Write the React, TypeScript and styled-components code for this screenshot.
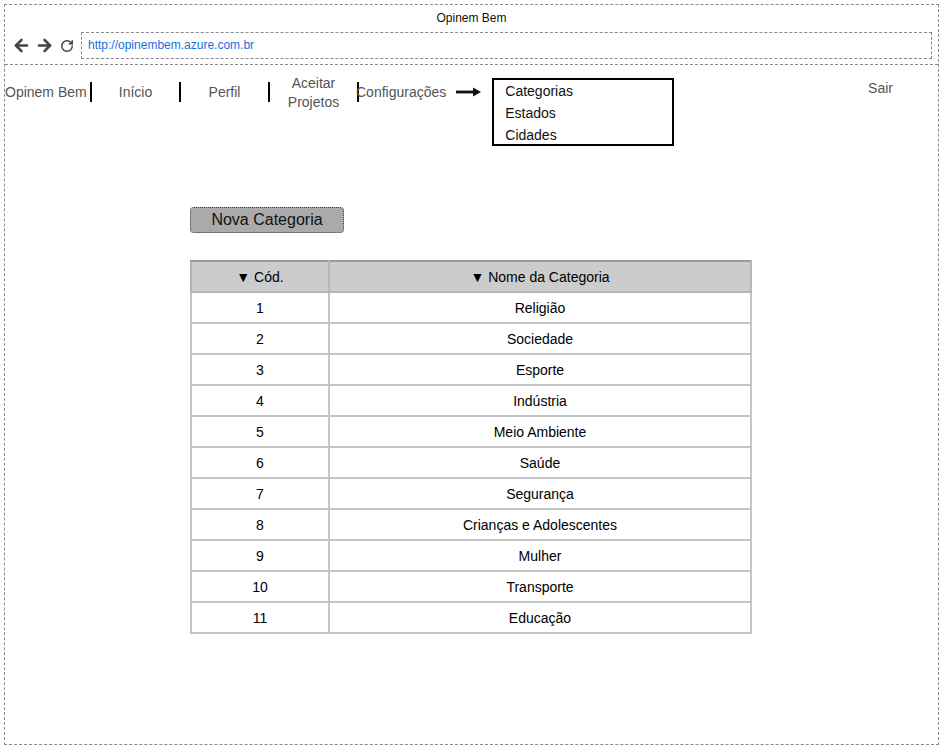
import styled, { createGlobalStyle } from "styled-components";
import { ArrowLeft, ArrowRight, RotateCw } from "lucide-react";

const categorias = [
    "Religião",
    "Sociedade",
    "Esporte",
    "Indústria",
    "Meio Ambiente",
    "Saúde",
    "Segurança",
    "Crianças e Adolescentes",
    "Mulher",
    "Transporte",
    "Educação",
];

export default function App() {
    return (
        <>
            <GlobalStyle />
            <Frame>
                <TopBar>
                    <Title>Opinem Bem</Title>
                    <UrlRow>
                        <NavIcons>
                            <ArrowLeft size={19} strokeWidth={3.2} />
                            <ArrowRight size={19} strokeWidth={3.2} />
                            <RotateCw size={14} strokeWidth={2.6} />
                        </NavIcons>
                        <UrlBox>http://opinembem.azure.com.br</UrlBox>
                    </UrlRow>
                </TopBar>

                <Nav>
                    <Brand>Opinem Bem</Brand>
                    <Separator />
                    <NavLink>Início</NavLink>
                    <Separator />
                    <NavLink>Perfil</NavLink>
                    <Separator />
                    <TwoLineLink>
                        Aceitar
                        <br />
                        Projetos
                    </TwoLineLink>
                    <Separator $overlap />
                    <ConfigLink>Configurações</ConfigLink>
                    <Arrow width="25" height="10" viewBox="0 0 25 10">
                        <rect x="0" y="3.6" width="19" height="2.8" fill="#111" />
                        <polygon points="17,0.5 25,5 17,9.5" fill="#111" />
                    </Arrow>
                    <Dropdown>
                        <DropItem>Categorias</DropItem>
                        <DropItem>Estados</DropItem>
                        <DropItem>Cidades</DropItem>
                    </Dropdown>
                    <Logout>Sair</Logout>
                </Nav>

                <Content>
                    <NewButton>Nova Categoria</NewButton>
                    <Table>
                        <thead>
                            <tr>
                                <HeadCell $width={138}>▼ Cód.</HeadCell>
                                <HeadCell>▼ Nome da Categoria</HeadCell>
                            </tr>
                        </thead>
                        <tbody>
                            {categorias.map((nome, idx) => (
                                <tr key={nome}>
                                    <Cell>{idx + 1}</Cell>
                                    <Cell>{nome}</Cell>
                                </tr>
                            ))}
                        </tbody>
                    </Table>
                </Content>
            </Frame>
        </>
    );
}

const GlobalStyle = createGlobalStyle`
    body {
        margin: 0;
        background: #fff;
        font-family: "Liberation Sans", Arial, sans-serif;
    }
`;

const Frame = styled.div`
    margin: 4px;
    width: 935px;
    height: 741px;
    box-sizing: border-box;
    border: 1px dashed #8a8a8a;
`;

const TopBar = styled.div`
    height: 60px;
    border-bottom: 1px dashed #8a8a8a;
    box-sizing: border-box;
    display: flex;
    flex-direction: column;
`;

const Title = styled.div`
    height: 27px;
    line-height: 26px;
    text-align: center;
    font-size: 12px;
    color: #111;
`;

const UrlRow = styled.div`
    display: flex;
    align-items: center;
    gap: 7px;
    padding: 0 6px 0 7px;
`;

const NavIcons = styled.div`
    display: flex;
    align-items: center;
    gap: 4px;
    color: #444;

    svg:last-child {
        margin-left: 2px;
    }
`;

const UrlBox = styled.div`
    flex: 1;
    height: 27px;
    box-sizing: border-box;
    border: 1px dashed #8a8a8a;
    padding-left: 6px;
    line-height: 25px;
    font-size: 12px;
    color: #1a6fe0;
`;

const Nav = styled.div`
    display: flex;
    align-items: flex-start;
    padding: 13px 45px 0 0;
    color: #555;
    font-size: 14px;
`;

const Brand = styled.div`
    width: 85px;
    height: 28px;
    line-height: 28px;
    white-space: nowrap;
`;

const Separator = styled.div<{ $overlap?: boolean }>`
    width: 2px;
    height: 20px;
    margin-top: 4px;
    background: #000;
    flex-shrink: 0;
    margin-right: ${({ $overlap }) => ($overlap ? "-3px" : "0")};
`;

const NavLink = styled.div`
    width: 87px;
    height: 28px;
    line-height: 28px;
    text-align: center;
`;

const TwoLineLink = styled.div`
    width: 87px;
    margin-top: -4px;
    line-height: 19px;
    text-align: center;
`;

const ConfigLink = styled.div`
    height: 28px;
    line-height: 28px;
    white-space: nowrap;
`;

const Arrow = styled.svg`
    flex-shrink: 0;
    margin: 9px 0 0 10px;
`;

const Dropdown = styled.div`
    width: 182px;
    height: 68px;
    margin: 0 0 0 11px;
    box-sizing: border-box;
    border: 2px solid #000;
    padding: 0 11px;
    color: #111;
`;

const DropItem = styled.div`
    line-height: 22px;
`;

const Logout = styled.div`
    margin-left: auto;
    line-height: 20px;
`;

const Content = styled.div`
    margin: 61px 0 0 185px;
`;

const NewButton = styled.div`
    width: 154px;
    height: 26px;
    box-sizing: border-box;
    border: 1px dotted #444;
    border-radius: 4px;
    background: #aaaaaa;
    color: #111;
    font-size: 16px;
    line-height: 24px;
    text-align: center;
`;

const Table = styled.table`
    margin-top: 27px;
    width: 562px;
    border-collapse: collapse;
    font-size: 14px;
    color: #000;
`;

const HeadCell = styled.th<{ $width?: number }>`
    width: ${({ $width }) => ($width ? `${$width}px` : "auto")};
    height: 31px;
    padding: 0;
    background: #cccccc;
    border: 2px solid #b4b4b4;
    border-top-color: #9a9a9a;
    font-weight: normal;
    box-sizing: border-box;
`;

const Cell = styled.td`
    height: 31px;
    padding: 0;
    text-align: center;
    border: 2px solid #c4c4c4;
    box-sizing: border-box;
`;
